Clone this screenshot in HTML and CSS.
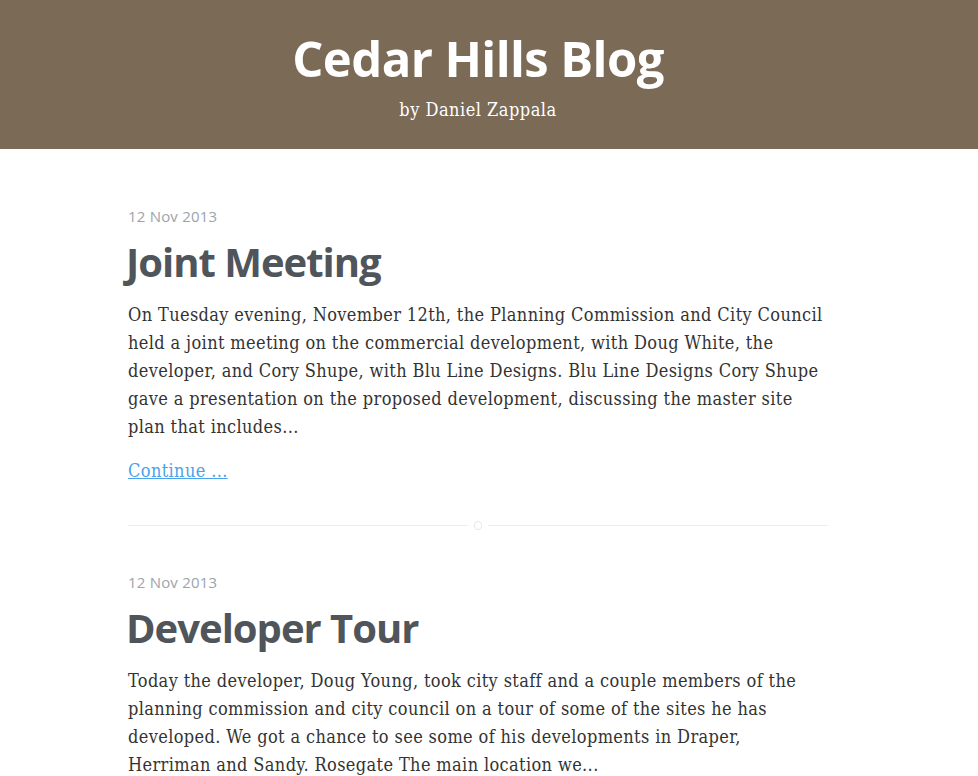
FILE: index.html
```html
<!DOCTYPE html>
<html lang="en">
<head>
<meta charset="utf-8">
<title>Cedar Hills Blog</title>
<link rel="stylesheet" href="styles.css">
</head>
<body>
<header class="masthead">
  <div class="masthead-inner">
    <h1 class="site-title">Cedar Hills Blog</h1>
    <p class="site-byline">by Daniel Zappala</p>
  </div>
</header>
<div class="page">
  <main class="posts">
    <article class="post">
      <div class="post-date">12 Nov 2013</div>
      <h2 class="post-title">Joint Meeting</h2>
      <p class="post-excerpt">On Tuesday evening, November 12th, the Planning Commission and City Council held a joint meeting on the commercial development, with Doug White, the developer, and Cory Shupe, with Blu Line Designs. Blu Line Designs Cory Shupe gave a presentation on the proposed development, discussing the master site plan that includes...</p>
      <a class="post-more" href="#">Continue ...</a>
    </article>
    <div class="divider"><span class="divider-line"></span><span class="divider-dot"></span><span class="divider-line"></span></div>
    <article class="post">
      <div class="post-date">12 Nov 2013</div>
      <h2 class="post-title">Developer Tour</h2>
      <p class="post-excerpt">Today the developer, Doug Young, took city staff and a couple members of the planning commission and city council on a tour of some of the sites he has developed. We got a chance to see some of his developments in Draper, Herriman and Sandy. Rosegate The main location we...</p>
      <a class="post-more" href="#">Continue ...</a>
    </article>
  </main>
</div>
</body>
</html>
```
FILE: styles.css
```css
html, body {
  margin: 0;
  padding: 0;
  background: #fff;
}
body {
  font-family: "DejaVu Serif Condensed", "DejaVu Serif", serif;
  color: #333;
}
.page,
.masthead-inner {
  width: 956px;
}
.masthead {
  background: #7b6a56;
  height: 149px;
  box-sizing: border-box;
  padding-top: 26px;
  color: #fff;
}
.masthead-inner {
  text-align: center;
}
.site-title {
  margin: 0;
  font-family: "Open Sans", sans-serif;
  font-weight: 700;
  font-size: 49px;
  line-height: 64px;
  letter-spacing: -0.6px;
}
.site-byline {
  margin: 8px 0 0;
  font-size: 18px;
  line-height: 24px;
  letter-spacing: 0.5px;
}
.posts {
  width: 700px;
  margin: 0 auto;
  padding-top: 57px;
}
.post-date {
  font-family: "Open Sans", sans-serif;
  font-size: 15px;
  line-height: 20px;
  letter-spacing: 0.2px;
  color: #9ba4ad;
}
.post-title {
  margin: 10px 0 0 -2px;
  font-family: "Open Sans", sans-serif;
  font-weight: 700;
  font-size: 40px;
  line-height: 52px;
  letter-spacing: -1px;
  color: #4f555b;
}
.post-excerpt {
  margin: 13px 0 0;
  font-size: 18px;
  line-height: 28px;
  letter-spacing: 0.37px;
}
.post-more {
  display: inline-block;
  margin-top: 16px;
  font-size: 18px;
  line-height: 28px;
  letter-spacing: 0.37px;
  color: #4aa3ea;
  text-decoration: underline;
}
.divider {
  display: flex;
  align-items: center;
  gap: 6px;
  margin: 36px 0 42px;
}
.divider-line {
  flex: 1;
  height: 1px;
  background: #e9eef0;
}
.divider-dot {
  width: 6px;
  height: 7px;
  border: 1px solid #e2e9ec;
  border-radius: 50%;
}
```
